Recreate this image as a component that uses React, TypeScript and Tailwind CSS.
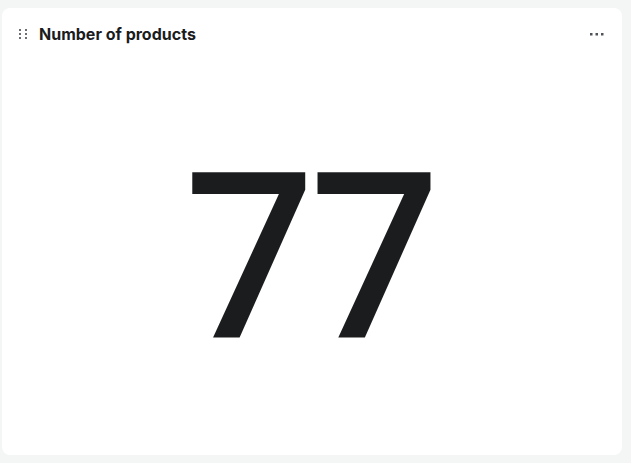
import React from "react";

export default function App() {
  return (
    <div className="w-[631px] h-[463px] bg-[#f4f5f5] pt-[8px] pl-[2px] pr-[9px] pb-[8px]" style={{ fontFamily: "Inter, 'Liberation Sans', sans-serif" }}>
      <div className="w-full h-full bg-white rounded-[8px] flex flex-col">
        <div className="flex items-center h-[52px] pl-[16px] pr-[18px]">
          <svg width="10" height="12" viewBox="0 0 10 12" className="mr-[11px]">
            {[0, 1, 2].map((r) => (
              <g key={r}>
                <rect x="1" y={1 + r * 4} width="2" height="2" fill="#6b6e73" />
                <rect x="7" y={1 + r * 4} width="2" height="2" fill="#6b6e73" />
              </g>
            ))}
          </svg>
          <span className="text-[16px] font-bold text-[#1b1c1e]">Number of products</span>
          <div className="flex-1" />
          <svg width="14" height="4" viewBox="0 0 14 4">
            <rect x="0" y="1" width="2.5" height="2.5" fill="#505359" />
            <rect x="5.5" y="1" width="2.5" height="2.5" fill="#505359" />
            <rect x="11" y="1" width="2.5" height="2.5" fill="#505359" />
          </svg>
        </div>
        <div className="flex-1 flex items-center justify-center pb-[20px]">
          <span className="text-[231px] leading-none text-[#1b1c1e] font-medium tracking-[-7px] pr-[7px] font-['Noto_Sans',sans-serif]">77</span>
        </div>
      </div>
    </div>
  );
}
